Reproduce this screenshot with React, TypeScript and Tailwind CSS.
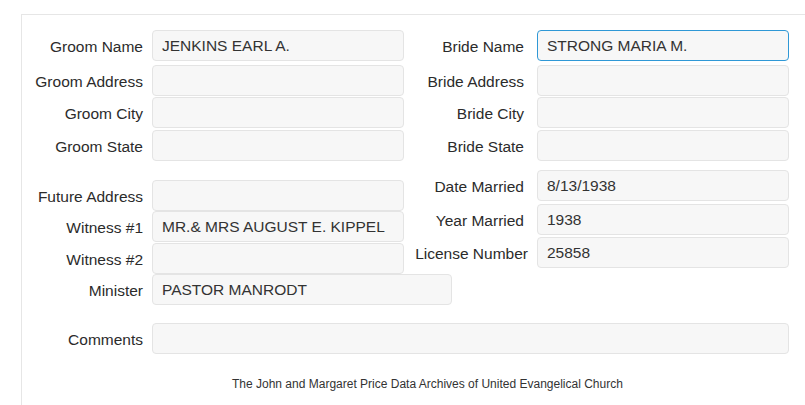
import React from "react";

const FONT = { fontFamily: "'Liberation Sans', Arial, sans-serif" };

function Field({ value = "", focused = false, w = "w-[252px]" }: { value?: string; focused?: boolean; w?: string }) {
  return (
    <div
      className={`${w} h-[31px] shrink-0 flex items-center px-[9px] rounded-[4px] bg-[#f7f7f7] border text-[15.5px] text-[#333] whitespace-nowrap ${
        focused ? "border-[#2f98d6]" : "border-[#e4e4e4]"
      }`}
    >
      {value}
    </div>
  );
}

function Row({
  label,
  value,
  focused,
  labelW,
  gap,
  mt,
  inputW,
}: {
  label: string;
  value?: string;
  focused?: boolean;
  labelW: string;
  gap: string;
  mt: string;
  inputW?: string;
}) {
  return (
    <div className={`flex items-center ${mt}`}>
      <div className={`${labelW} shrink-0 text-right pt-[3px] text-[15.5px] text-[#2b2b2b] whitespace-nowrap`}>{label}</div>
      <div className={gap}>
        <Field value={value} focused={focused} w={inputW} />
      </div>
    </div>
  );
}

export default function App() {
  const L = { labelW: "w-[121px]", gap: "ml-[9px]" };
  const R = { labelW: "w-[114px]", gap: "ml-[13px]" };

  return (
    <div className="w-[805px] h-[405px] overflow-hidden bg-white" style={FONT}>
      <div className="ml-[21px] mt-[14px] border-t border-l border-[#e6e6e6] h-[400px]">
        {/* ── Names & places ─────────────────────── */}
        <div className="flex pt-[15px]">
          <div className="w-[388px] shrink-0">
            <Row {...L} mt="mt-0" label="Groom Name" value="JENKINS EARL A." />
            <Row {...L} mt="mt-[4px]" label="Groom Address" />
            <Row {...L} mt="mt-[1px]" label="Groom City" />
            <Row {...L} mt="mt-[2px]" label="Groom State" />
          </div>
          <div>
            <Row {...R} mt="mt-0" label="Bride Name" value="STRONG MARIA M." focused />
            <Row {...R} mt="mt-[4px]" label="Bride Address" />
            <Row {...R} mt="mt-[1px]" label="Bride City" />
            <Row {...R} mt="mt-[2px]" label="Bride State" />
          </div>
        </div>

        {/* ── Ceremony ───────────────────────────── */}
        <div className="flex">
          <div className="w-[388px] shrink-0 pt-[19px]">
            <Row {...L} mt="mt-0" label="Future Address" />
            <Row {...L} mt="mt-0" label="Witness #1" value="MR.& MRS AUGUST E. KIPPEL" />
            <Row {...L} mt="mt-[1px]" label="Witness #2" />
            <Row {...L} mt="mt-0" label="Minister" value="PASTOR MANRODT" inputW="w-[300px]" />
          </div>
          <div className="pt-[9px]">
            <Row {...R} mt="mt-0" label="Date Married" value="8/13/1938" />
            <Row {...R} mt="mt-[3px]" label="Year Married" value="1938" />
            <Row labelW="w-[118px]" gap="ml-[9px]" mt="mt-[2px]" label="License Number" value="25858" />
          </div>
        </div>

        {/* ── Comments ───────────────────────────── */}
        <Row {...L} mt="mt-[18px]" label="Comments" inputW="w-[637px]" />

        <p className="mt-[23px] ml-[210px] text-[12px] leading-[14px] text-[#333] whitespace-nowrap">
          The John and Margaret Price Data Archives of United Evangelical Church
        </p>
      </div>
    </div>
  );
}
